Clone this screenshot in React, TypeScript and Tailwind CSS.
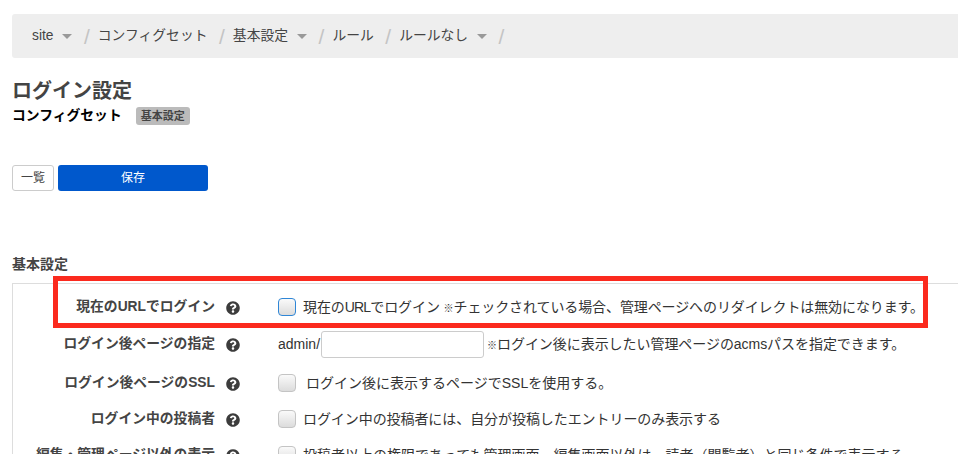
import { FaQuestionCircle } from 'react-icons/fa';

const font = { fontFamily: '"Liberation Sans", "Noto Sans CJK JP", sans-serif' };

function Caret() {
  return <span className="ml-[9px] inline-block h-0 w-0 border-x-[5px] border-t-[5px] border-x-transparent border-t-[#999]" />;
}

function Slash() {
  return <span className="ml-[11.5px] mr-[8px] text-[21px] font-light leading-none text-[#c4c4c4]">/</span>;
}

function Crumb({ label, caret }: { label: string; caret?: boolean }) {
  return (
    <>
      <span className="flex items-center">
        {label}
        {caret ? <Caret /> : null}
      </span>
      <Slash />
    </>
  );
}

function Checkbox({ focused }: { focused?: boolean }) {
  return (
    <span
      className={
        'mr-[7px] inline-block h-[18px] w-[18px] shrink-0 rounded-[4px] border bg-gradient-to-b from-[#fafafa] to-[#dcdcdc] ' +
        (focused ? 'border-[#2f86d6]' : 'border-[#c4c4c4]')
      }
    />
  );
}

function Row({ label, height, children }: { label: string; height: string; children: React.ReactNode }) {
  return (
    <div className={'flex items-center ' + height}>
      <div className="w-[202px] shrink-0 whitespace-nowrap text-right font-bold text-[#444]">{label}</div>
      <div className="flex w-[63px] shrink-0 pl-[11px] pt-px">
        <FaQuestionCircle size={14} className="text-[#3c3c3c]" />
      </div>
      <div className="flex items-center whitespace-nowrap text-[14px] text-[#333]">{children}</div>
    </div>
  );
}

export default function App() {
  return (
    <div className="relative h-[454px] w-[958px] overflow-hidden bg-white pl-3 pt-[14px] text-[13.8px]" style={font}>
      <nav className="flex h-11 items-center rounded-l-[3px] bg-[#eee] pl-5 text-[#444]">
        <Crumb label="site" caret />
        <Crumb label="コンフィグセット" />
        <Crumb label="基本設定" caret />
        <Crumb label="ルール" />
        <Crumb label="ルールなし" caret />
      </nav>

      <h1 className="mt-[20px] text-[20px] font-bold leading-[26px] text-[#444]">ログイン設定</h1>
      <div className="mt-[2px] flex h-5 items-center">
        <span className="font-bold text-black">コンフィグセット</span>
        <span className="ml-[14px] flex h-[18px] items-center rounded-[3px] bg-[#bbb] px-[5px] text-[11px] font-bold text-[#444]">基本設定</span>
      </div>

      <div className="mt-[39px] flex gap-1">
        <button type="button" className="h-[26px] w-[42px] rounded-[3px] border border-[#ccc] bg-white text-[12px] text-[#444]">一覧</button>
        <button type="button" className="h-[26px] w-[150px] rounded-[3px] bg-[#0058cc] text-[12px] text-white">保存</button>
      </div>

      <h2 className="mt-[64px] text-[14px] font-bold leading-[18px] text-[#444]">基本設定</h2>
      <div className="mt-[10px] border-l border-t border-[#ddd] pt-[5px]">
        <Row label="現在のURLでログイン" height="mb-px h-9">
          <Checkbox focused />
          <span className="tracking-[-0.1px]">
            現在の<span className="tracking-[-0.8px]">URL</span>でログイン <span className="text-[10px] font-bold">※</span>チェックされている場合、管理ページへのリダイレクトは無効になります。
          </span>
        </Row>
        <Row label="ログイン後ページの指定" height="h-9">
          admin/
          <input className="ml-px mr-[3px] h-[27px] w-[163px] rounded-[3px] border border-[#ccc] bg-white" />
          <span className="tracking-[-0.05px]">
            <span className="text-[10px] font-bold">※</span>ログイン後に表示したい管理ページのacmsパスを指定できます。
          </span>
        </Row>
        <Row label="ログイン後ページのSSL" height="h-[42px]">
          <Checkbox />
          <span className="ml-[3px]">ログイン後に表示するページでSSLを使用する。</span>
        </Row>
        <Row label="ログイン中の投稿者" height="h-[30px]">
          <Checkbox />
          <span className="tracking-[-0.07px]">ログイン中の投稿者には、自分が投稿したエントリーのみ表示する</span>
        </Row>
        <Row label="編集・管理ページ以外の表示" height="h-[42px]">
          <Checkbox />
          投稿者以上の権限であっても管理画面、編集画面以外は、読者（閲覧者）と同じ条件で表示する
        </Row>
      </div>

      <div className="pointer-events-none absolute left-[53px] top-[276px] h-[52px] w-[875px] border-[5px] border-[#fb2a1e]" />
    </div>
  );
}
